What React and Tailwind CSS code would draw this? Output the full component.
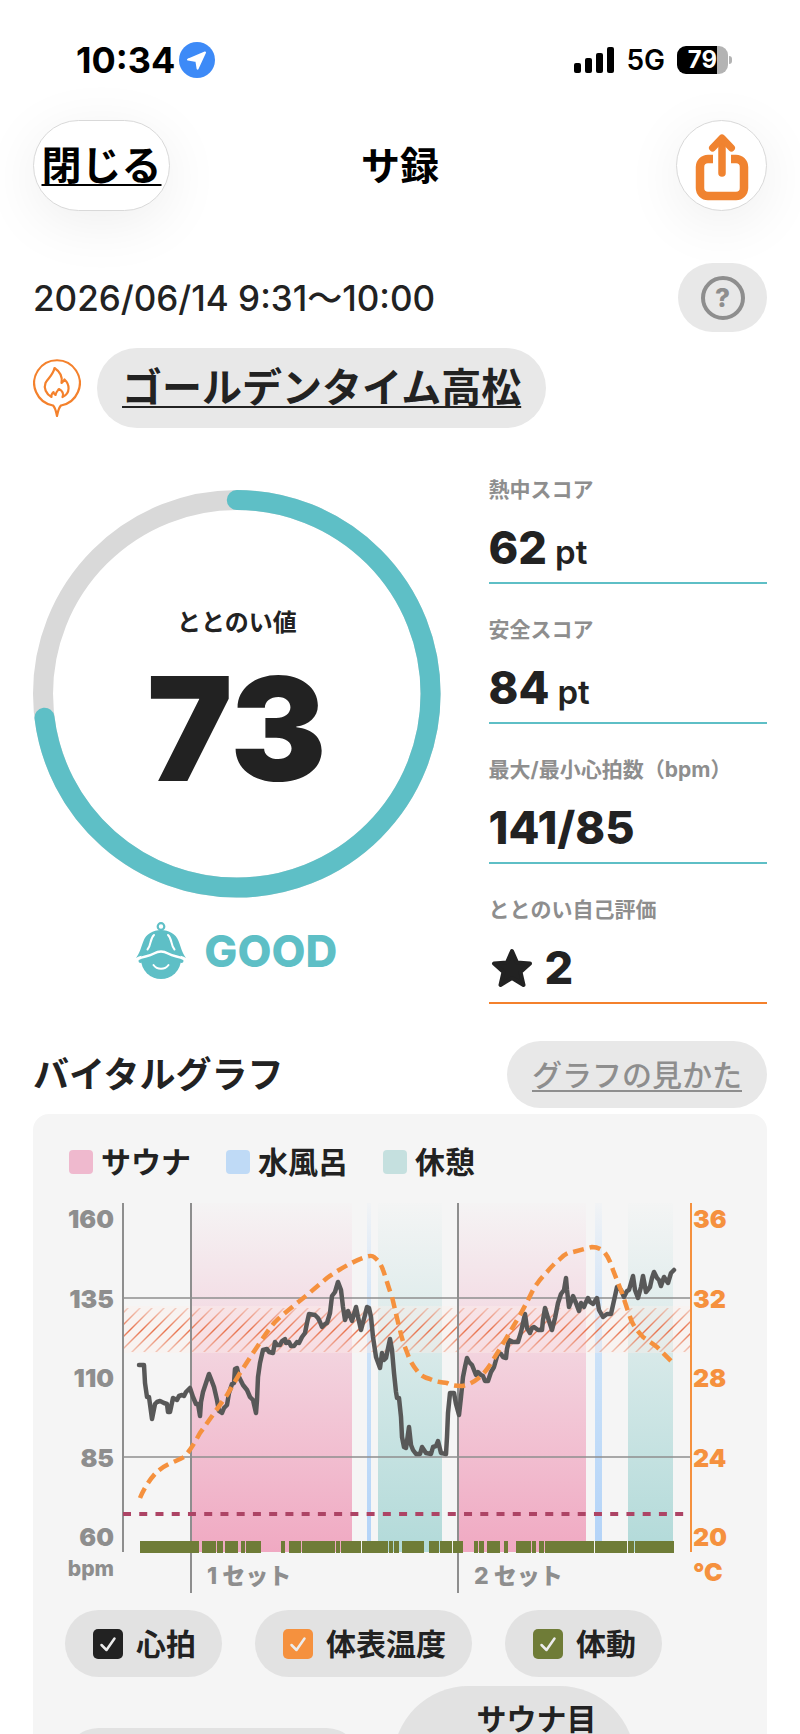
import { useState } from "react";

const STAGES = [
  { name: "サウナ", swatch: "bg-[#efb9ce]" },
  { name: "水風呂", swatch: "bg-[#bfdaf6]" },
  { name: "休憩", swatch: "bg-[#c5e0df]" },
];

const BANDS = [
  { x: 126, w: 161, fill: "url(#sauna)" },
  { x: 302, w: 4, fill: "url(#water)" },
  { x: 313, w: 64, fill: "url(#rest)" },
  { x: 394, w: 127, fill: "url(#sauna)" },
  { x: 530, w: 7, fill: "url(#water)" },
  { x: 563, w: 45, fill: "url(#rest)" },
];

const HEART_RATE =
  "74,165 79,165 80,183 82,197 84,197 87,219 90,204 92,202 95,201 99,203 102,204 103,212 105,212 108,198 112,200 114,196 117,195 119,196 121,192 125,188 128,197 131,204 133,204 135,216 136,202 138,192 144,174 146,179 149,187 152,200 154,211 157,213 159,208 162,205 164,193 167,184 169,183 170,169 172,168 174,177 178,185 182,190 185,197 188,200 191,213 192,200 193,177 195,163 198,150 202,149 204,152 208,153 210,142 212,145 215,145 217,141 220,139 221,143 224,142 226,146 229,146 232,142 234,143 237,137 240,133 242,123 244,114 250,115 253,118 255,122 257,127 260,124 262,123 265,113 267,96 270,92 273,82 276,90 278,107 280,120 283,111 287,121 291,107 293,117 296,130 300,115 302,107 304,108 306,117 308,137 311,157 315,168 317,153 319,160 321,158 325,139 327,150 329,173 331,192 332,198 334,198 336,217 337,237 339,247 341,248 344,227 346,245 348,250 351,254 355,254 357,247 361,253 366,254 368,247 371,246 373,241 376,253 381,254 382,237 383,213 385,193 389,193 391,204 394,215 396,197 398,177 400,167 402,158 404,162 407,165 411,175 413,172 416,175 418,176 420,181 423,181 426,172 429,167 431,160 433,153 436,154 438,157 441,158 442,149 444,140 448,142 453,142 456,132 460,114 462,128 465,133 467,128 469,127 473,130 477,130 478,120 480,108 483,118 487,130 490,118 493,103 496,94 499,90 501,78 502,90 504,107 508,96 511,103 514,111 516,103 519,107 521,102 523,98 525,102 528,104 532,98 534,110 538,117 542,114 546,114 548,105 552,87 556,90 559,97 562,91 564,90 568,76 570,90 573,98 576,87 578,76 581,92 585,87 587,78 589,72 592,78 594,80 596,86 599,77 603,83 606,73 609,70";

const SKIN_TEMP =
  "M75 298C79 288 87 276 93 271C101 264 112 261 119 257C125 251 130 242 135 233L162 195L175 173L188 153C198 138 204 129 210 122C219 113 231 104 242 95L262 78C273 70 287 62 298 58C302 56 307 55 309 57C313 60 316 64 318 70C321 78 323 86 327 97C330 109 332 119 335 130C337 140 340 147 343 155C345 161 349 167 353 172C357 177 361 178 365 179C371 182 376 182 382 183C387 186 392 186 397 186C404 185 410 181 415 177C420 172 425 166 428 160L442 137L455 115C460 106 464 98 468 90C472 83 477 77 482 72C486 67 491 62 495 59C499 55 503 52 508 52L527 47C532 47 537 49 540 53C544 58 546 64 548 70L557 93C560 102 563 112 567 122C570 128 574 133 578 137C582 140 587 143 592 147L607 162";

const MOTION = [
  [75, 59], [137, 14], [152, 6], [160, 13], [176, 4], [181, 15], [216, 4], [224, 12], [237, 33], [271, 4],
  [276, 20], [297, 26], [324, 4], [329, 5], [337, 22], [364, 10], [375, 12], [388, 10], [409, 4], [414, 5],
  [422, 13], [439, 4], [451, 6], [457, 9], [467, 4], [474, 5], [480, 6], [486, 43], [530, 32], [563, 6],
  [570, 9], [579, 30],
];

const LEFT_TICKS = ["160", "135", "110", "85", "60"];
const RIGHT_TICKS = ["36", "32", "28", "24", "20"];

function StatusBar() {
  return (
    <div className="flex items-center justify-between pt-10 pl-[76px] pr-[68px]">
      <div className="flex items-center gap-1">
        <span className="text-4xl leading-10 font-bold text-black">10:34</span>
        <svg width="36" height="36" viewBox="0 0 36 36" aria-hidden="true">
          <circle cx="18" cy="18" r="18" fill="#3d8af7" />
          <path d="M26 10.5 18.6 26.6 17.4 19 9 17.6Z" fill="#fff" stroke="#fff" strokeWidth="2" strokeLinejoin="round" />
        </svg>
      </div>
      <div className="flex items-center">
        <svg width="40" height="26" viewBox="0 0 40 26" aria-hidden="true">
          <rect x="0" y="16" width="7" height="10" rx="2" />
          <rect x="11" y="11" width="7" height="15" rx="2" />
          <rect x="22" y="6" width="7" height="20" rx="2" />
          <rect x="33" y="0" width="7" height="26" rx="2" />
        </svg>
        <span className="ml-3 text-[28px] leading-10 font-semibold text-black">5G</span>
        <div className="ml-3 flex items-center">
          <div className="flex h-7 w-[51px] items-center justify-center overflow-hidden rounded-[9px] bg-linear-to-r from-black from-78% to-[#b3b3b3] to-78% text-2xl leading-7 font-bold text-white">
            79
          </div>
          <div className="ml-px h-2 w-[3px] rounded-r-full bg-[#b3b3b3]" />
        </div>
      </div>
    </div>
  );
}

function Header() {
  return (
    <header className="mt-10 grid grid-cols-[1fr_auto_1fr] items-center px-[33px]">
      <button className="flex h-[91px] w-[137px] items-center justify-center rounded-full border border-[#d9d9d9] bg-white text-[40px] leading-10 font-bold text-black underline decoration-2 underline-offset-4 shadow-[0_12px_60px_rgba(0,0,0,0.07)]">
        閉じる
      </button>
      <h1 className="text-[39px] leading-10 font-bold text-black">サ録</h1>
      <button
        aria-label="共有"
        className="flex size-[91px] items-center justify-center justify-self-end rounded-full border border-[#d9d9d9] bg-white shadow-[0_12px_60px_rgba(0,0,0,0.07)]"
      >
        <svg width="54" height="72" viewBox="0 0 54 72" fill="none" stroke="#f08330" aria-hidden="true">
          <path d="M18 29H13A8 8 0 0 0 5 37V58A8 8 0 0 0 13 66H41A8 8 0 0 0 49 58V37A8 8 0 0 0 41 29H36" strokeWidth="8.500" />
          <path d="M27 43V10" strokeWidth="7.500" strokeLinecap="round" />
          <path d="M17.500 18 27 8 36.500 18" strokeWidth="7" strokeLinecap="round" strokeLinejoin="round" />
        </svg>
      </button>
    </header>
  );
}

function PinIcon() {
  return (
    <svg width="48" height="58" viewBox="0 0 48 58" fill="none" stroke="#f4812c" strokeWidth="2.200" strokeLinejoin="round" aria-hidden="true">
      <path d="M20 46.500A22.800 22.800 0 1 1 28 46.500C26 48 25 52 24 57C23 52 22 48 20 46.500Z" />
      <path d="M18.500 38C13 35 10.500 29 12.500 24C14.500 19.500 20 16.500 21.500 9C26 12 30 17 28.500 24C30 23 31 21.500 31.500 20.500C36.500 25 38 34 29.500 38C31 35 29.500 31.500 26 30C24 32.500 23 33 22.500 36C21.500 35 20.500 34.500 20.500 33C19 34.500 18 36 18.500 38Z" />
    </svg>
  );
}

function FaceIcon() {
  return (
    <svg width="50" height="58" viewBox="0 0 50 58" aria-hidden="true">
      <circle cx="25" cy="37" r="20" fill="#5ebfc6" />
      <circle cx="4.500" cy="39" r="2" fill="#5ebfc6" />
      <circle cx="45.500" cy="39" r="2" fill="#5ebfc6" />
      <path
        d="M0 36C4 31 5 25 7.500 19C10 12 17 8 25 8S40 12 42.500 19C45 25 46 31 50 36C44 32.500 38 33 33 30C27 26.500 23 26.500 17 30C12 33 6 32.500 0 36Z"
        fill="#5ebfc6"
      />
      <path d="M2 37C8 34 12 35 18 31.500C23 28.500 27 28.500 32 31.500C38 35 42 34 48 37" fill="none" stroke="#fff" strokeWidth="2.500" />
      <path d="M18 13C13.500 17 15.500 23 11.500 27.500M32 13C36.500 17 34.500 23 38.500 27.500" fill="none" stroke="#fff" strokeWidth="2" strokeLinecap="round" />
      <circle cx="25" cy="4.500" r="3.300" fill="none" stroke="#5ebfc6" strokeWidth="2.200" />
      <path d="M17.500 43C21 48 29 48 32.500 43" fill="none" stroke="#fff" strokeWidth="2" strokeLinecap="round" />
    </svg>
  );
}

function ScoreRing({ value }) {
  const length = 2 * Math.PI * 193.5;
  return (
    <div className="grid">
      <svg viewBox="0 0 407 407" fill="none" className="col-start-1 row-start-1 w-full" aria-hidden="true">
        <circle cx="203.5" cy="203.5" r="193.5" stroke="#d9d9d9" strokeWidth="20" />
        <circle
          cx="203.5"
          cy="203.5"
          r="193.5"
          stroke="#5ebfc6"
          strokeWidth="20"
          strokeLinecap="round"
          strokeDasharray={`${(length * value) / 100} ${length}`}
          transform="rotate(-90 203.5 203.5)"
        />
      </svg>
      <div className="col-start-1 row-start-1 flex flex-col items-center pt-[113px]">
        <span className="text-2xl leading-10 font-bold">ととのい値</span>
        <span className="mt-3.5 text-[144px] leading-[144px] font-black">{value}</span>
      </div>
    </div>
  );
}

function Metric({ label, line = "border-[#5ebfc6]", children }) {
  return (
    <div className={`border-b-2 pb-1 ${line}`}>
      <dt className="text-[21px] leading-6 font-bold text-[#8e8e8e]">{label}</dt>
      <dd className="mt-3.5 -mb-0.5 flex h-16 items-baseline text-[45px] leading-16 font-extrabold">{children}</dd>
    </div>
  );
}

function Unit({ children }) {
  return <span className="ml-2 text-[33px] leading-10 font-semibold">{children}</span>;
}

function VitalChart({ shown }) {
  return (
    <svg viewBox="0 0 670 400" className="mt-[18px] w-full" role="img" aria-label="バイタルグラフ">
      <defs>
        <linearGradient id="sauna" x1="0" y1="0" x2="0" y2="1">
          <stop offset="0" stopColor="#f0a9c2" stopOpacity="0.02" />
          <stop offset="1" stopColor="#f0a9c2" />
        </linearGradient>
        <linearGradient id="water" x1="0" y1="0" x2="0" y2="1">
          <stop offset="0" stopColor="#b3d5fa" stopOpacity="0.05" />
          <stop offset="0.5" stopColor="#c8e0f8" />
          <stop offset="1" stopColor="#b3d3f8" />
        </linearGradient>
        <linearGradient id="rest" x1="0" y1="0" x2="0" y2="1">
          <stop offset="0" stopColor="#b2dad9" stopOpacity="0.02" />
          <stop offset="1" stopColor="#b2dad9" />
        </linearGradient>
        <linearGradient id="fade" x1="0" y1="0" x2="0" y2="1">
          <stop offset="0" stopColor="#e8724c" stopOpacity="0.3" />
          <stop offset="0.5" stopColor="#e8724c" />
          <stop offset="1" stopColor="#e8724c" stopOpacity="0.35" />
        </linearGradient>
        <clipPath id="zone">
          <rect x="59" y="108" width="566" height="44" />
        </clipPath>
      </defs>

      {BANDS.map((b) => (
        <rect key={b.x} x={b.x} y="3" width={b.w} height="349" fill={b.fill} />
      ))}

      {/* target heart rate zone */}
      <rect x="59" y="106" width="566" height="47" fill="#fff1ea" fillOpacity="0.35" />
      <g clipPath="url(#zone)">
        {Array.from({ length: 52 }, (_, i) => {
          const x = 18 + i * 12;
          return <path key={x} d={`M${x} 152L${x + 44} 108H${x + 46}L${x + 2} 152Z`} fill="url(#fade)" />;
        })}
      </g>

      <g stroke="#8e8e8e" strokeWidth="1.500">
        <path d="M58 98H626M58 257H626" />
        <path d="M58 3V352M126 3V393M393 3V393" strokeWidth="2" />
      </g>
      <path d="M626 3V352" stroke="#f5913e" strokeWidth="2" />
      <path d="M58 314H621" stroke="#ad4465" strokeWidth="4" strokeDasharray="8 8.240" />

      {shown.motion && MOTION.map(([x, w]) => <rect key={x} x={x} y="341" width={w} height="12" fill="#6f7c37" />)}
      {shown.heart && (
        <polyline points={HEART_RATE} fill="none" stroke="#585858" strokeWidth="4.500" strokeLinejoin="round" strokeLinecap="round" />
      )}
      {shown.temp && <path d={SKIN_TEMP} fill="none" stroke="#f5913e" strokeWidth="4.500" strokeDasharray="11 6" />}

      <g fill="#8e8e8e" fontSize="25" fontWeight="900" textAnchor="end">
        {LEFT_TICKS.map((t, i) => (
          <text key={t} x="49" y={28 + i * 79.5}>
            {t}
          </text>
        ))}
        <text x="49" y="376" fontSize="21" fontWeight="800">
          bpm
        </text>
      </g>
      <g fill="#f5913e" fontSize="25" fontWeight="900">
        {RIGHT_TICKS.map((t, i) => (
          <text key={t} x="628" y={28 + i * 79.5}>
            {t}
          </text>
        ))}
        <text x="628" y="381">
          °C
        </text>
      </g>
      <g fill="#8e8e8e" fontSize="23" fontWeight="800">
        <text x="142" y="384">1 セット</text>
        <text x="409" y="384">2 セット</text>
      </g>
    </svg>
  );
}

function Chip({ color, checked, onChange, className = "", textClass = "", children, ...rest }) {
  return (
    <label className={`flex items-center rounded-full bg-[#e2e2e2] pl-7 pr-[26px] ${className}`}>
      <span className="grid size-[30px] shrink-0">
        <input
          type="checkbox"
          checked={checked}
          onChange={onChange}
          className={`col-start-1 row-start-1 size-[30px] appearance-none rounded-[5px] ${color}`}
          {...rest}
        />
        {checked && (
          <svg viewBox="0 0 30 30" className="pointer-events-none col-start-1 row-start-1" aria-hidden="true">
            <path d="M8.500 16 13.500 21 21.500 9.500" fill="none" stroke="#ececec" strokeWidth="2.500" strokeLinecap="round" strokeLinejoin="round" />
          </svg>
        )}
      </span>
      <span className={`ml-[13px] flex-1 text-center text-[30px] leading-[42px] font-bold ${textClass}`}>{children}</span>
    </label>
  );
}

function App() {
  const [shown, setShown] = useState({ heart: true, temp: true, motion: true, rest: true, target: true });
  const toggle = (key) => () => setShown({ ...shown, [key]: !shown[key] });

  return (
    <div className="h-screen overflow-hidden bg-white font-['Inter','Noto_Sans_CJK_JP',sans-serif] text-[#222222]" lang="ja">
      <StatusBar />
      <Header />

      <main className="px-[33px]">
        <div className="mt-[52px] flex items-center justify-between">
          <p className="text-[35px] leading-10 font-medium">2026/06/14 9:31〜10:00</p>
          <button aria-label="ヘルプ" className="flex h-[69px] w-[89px] items-center justify-center rounded-full bg-[#e8e8e8]">
            <span className="flex size-11 items-center justify-center rounded-full border-4 border-[#8e8e8e] text-[26px] leading-8 font-extrabold text-[#8e8e8e]">
              ?
            </span>
          </button>
        </div>

        <div className="mt-4 flex items-center gap-4">
          <PinIcon />
          <a
            href="#sauna"
            className="flex h-20 items-center rounded-full bg-[#e8e8e8] px-[25px] text-[40px] leading-10 font-bold underline decoration-2 underline-offset-4"
          >
            ゴールデンタイム高松
          </a>
        </div>

        <section className="mt-[50px] grid grid-cols-[407fr_278fr] gap-12">
          <div className="pt-3">
            <ScoreRing value={73} />
            <div className="mt-6 flex items-center justify-center gap-[18px]">
              <FaceIcon />
              <span className="text-[44px] leading-[58px] font-extrabold text-[#5ebfc6]">GOOD</span>
            </div>
          </div>
          <dl className="flex flex-col gap-[34px]">
            <Metric label="熱中スコア">
              62<Unit>pt</Unit>
            </Metric>
            <Metric label="安全スコア">
              84<Unit>pt</Unit>
            </Metric>
            <Metric label="最大/最小心拍数（bpm）">141/85</Metric>
            <Metric label="ととのい自己評価" line="border-[#f4812c]">
              <svg width="42" height="40" viewBox="0 0 42 40" className="mr-3 ml-0.5 self-center" aria-hidden="true">
                <path
                  d="M21 3 26 14.500 39 15.500 29.500 24 32.500 37 21 30 9.500 37 12.500 24 3 15.500 16 14.500Z"
                  fill="#222222"
                  stroke="#222222"
                  strokeWidth="4"
                  strokeLinejoin="round"
                />
              </svg>
              2
            </Metric>
          </dl>
        </section>

        <section>
          <div className="mt-[37px] flex items-center justify-between">
            <h2 className="text-4xl leading-10 font-bold">バイタルグラフ</h2>
            <button className="h-[67px] rounded-full bg-[#e8e8e8] px-[25px] text-[30px] leading-10 font-medium text-[#8e8e8e] underline decoration-2 underline-offset-4">
              グラフの見かた
            </button>
          </div>

          <div className="mt-1.5 rounded-2xl bg-[#f5f5f5] px-8 pt-7">
            <ul className="flex gap-[31px]">
              {STAGES.map((s) => (
                <li key={s.name} className="flex items-center gap-2 text-[30px] leading-10 font-bold">
                  <span className={`ml-1 size-6 rounded-sm ${s.swatch}`} />
                  {s.name}
                </li>
              ))}
            </ul>

            <VitalChart shown={shown} />

            <div className="mt-2.5 flex flex-wrap items-center gap-x-[33px] gap-y-[9px]">
              <Chip color="bg-[#222222]" checked={shown.heart} onChange={toggle("heart")} className="h-[67px]">
                心拍
              </Chip>
              <Chip color="bg-[#f5913e]" checked={shown.temp} onChange={toggle("temp")} className="h-[67px]">
                体表温度
              </Chip>
              <Chip color="bg-[#6f7c37]" checked={shown.motion} onChange={toggle("motion")} className="h-[67px]">
                体動
              </Chip>
              <Chip
                color="bg-[#ad4465]"
                checked={shown.rest}
                onChange={toggle("rest")}
                className="h-[67px] w-[295px]"
                aria-label="安静時心拍"
              />
              <Chip
                color="bg-[#e8724c]"
                checked={shown.target}
                onChange={toggle("target")}
                className="h-[151px] w-[242px]"
                textClass="self-start pt-3"
              >
                サウナ目
              </Chip>
            </div>
          </div>
        </section>
      </main>
    </div>
  );
}

export default App;
